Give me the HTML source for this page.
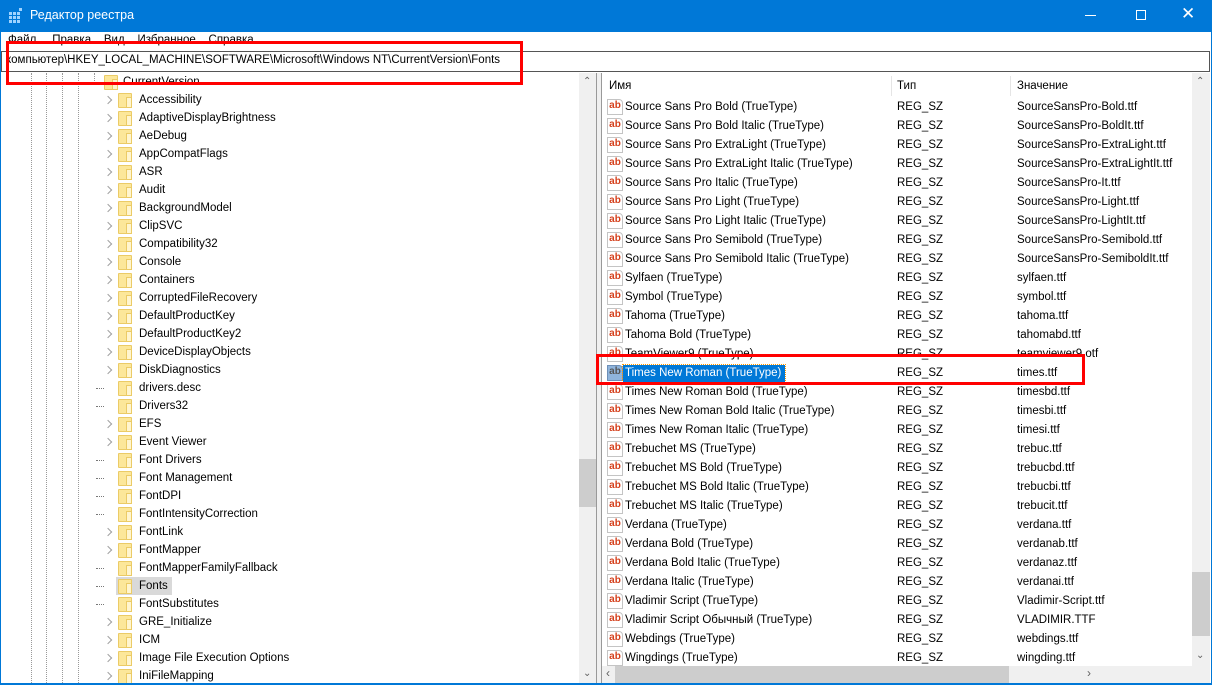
<!DOCTYPE html>
<html><head><meta charset="utf-8"><style>
*{margin:0;padding:0;box-sizing:border-box}
body{width:1212px;height:685px;overflow:hidden;background:#fff;font-family:"Segoe UI","Liberation Sans","DejaVu Sans",sans-serif;font-size:12px;color:#000;position:relative}
.a{position:absolute;white-space:nowrap}
.t{font-size:11.5px;line-height:18px}
.fold{position:absolute;width:14px;height:15px;background:#fce79a;border:1px solid #ebcb66;border-radius:1px}
.fold:after{content:"";position:absolute;right:-1px;bottom:-1px;width:4px;height:9px;background:#fff5cf;border:1px solid #ebcb66}
.chev{position:absolute;width:6px;height:6px;border-right:1.5px solid #a0a0a0;border-top:1.5px solid #a0a0a0;transform:rotate(45deg)}
.vd{position:absolute;width:1px;border-left:1px dotted #999;top:73px;height:610px}
.ic{position:absolute;width:16px;height:16px;border:1px solid #c4c4c4;background:#fff;font:bold 10px "Liberation Sans",sans-serif;color:#d5401c;line-height:12px;text-align:center;border-radius:0 4px 0 0}
</style></head><body>
<div class="a" style="left:0;top:0;width:1212px;height:32px;background:#0078d7"></div>
<svg class="a" style="left:8px;top:8px" width="16" height="16"><g fill="#9fd3ff"><rect x="1" y="4" width="3" height="3"/><rect x="5" y="4" width="3" height="3"/><rect x="9" y="4" width="3" height="3"/><rect x="1" y="8" width="3" height="3"/><rect x="5" y="8" width="3" height="3"/><rect x="9" y="8" width="3" height="3"/><rect x="1" y="12" width="3" height="3"/><rect x="5" y="12" width="3" height="3"/><rect x="9" y="12" width="3" height="3"/><rect x="11" y="0" width="3" height="3"/></g></svg>
<div class="a" style="left:30px;top:8px;color:#fff;font-size:12.5px">Редактор реестра</div>
<div class="a" style="left:1085px;top:15px;width:11px;height:1px;background:#fff"></div>
<div class="a" style="left:1136px;top:10px;width:10px;height:10px;border:1px solid #fff"></div>
<div class="a" style="left:1181px;top:4px;color:#fff;font-size:17px">✕</div>
<div class="a" style="left:0;top:32px;width:1212px;height:19px;background:#fff"></div>
<div class="a" style="left:8px;top:34px;font-size:11.5px">Файл&nbsp;&nbsp;&nbsp;&nbsp;&nbsp;Правка&nbsp;&nbsp;&nbsp;&nbsp;Вид&nbsp;&nbsp;&nbsp;&nbsp;Избранное&nbsp;&nbsp;&nbsp;&nbsp;Справка</div>
<div class="a" style="left:1px;top:51px;width:1209px;height:21px;border:1px solid #555;background:#fff"></div>
<div class="a" style="left:6px;top:54px;font-size:11.5px">компьютер\HKEY_LOCAL_MACHINE\SOFTWARE\Microsoft\Windows NT\CurrentVersion\Fonts</div>
<div class="vd" style="left:31px"></div><div class="vd" style="left:46px"></div><div class="vd" style="left:62px"></div><div class="vd" style="left:78px"></div>
<div class="a" style="left:94px;top:73px;width:1px;height:10px;border-left:1px dotted #999"></div>
<div class="a" style="left:86px;top:77px;color:#888;font-size:10px">⌄</div>
<div class="fold" style="left:104px;top:75px"></div>
<div class="a t" style="left:123px;top:73px">CurrentVersion</div>
<div id="tree"></div>
<div class="a" style="left:579px;top:73px;width:17px;height:611px;background:#f0f0f0"></div>
<div class="a" style="left:579px;top:459px;width:17px;height:48px;background:#cdcdcd"></div>
<div class="a" style="left:583px;top:76px;color:#606060;font-size:10px">⌃</div>
<div class="a" style="left:583px;top:668px;color:#606060;font-size:10px">⌄</div>
<div class="a" style="left:596px;top:73px;width:1px;height:611px;background:#999"></div>
<div class="a" style="left:597px;top:73px;width:4px;height:611px;background:#f0f0f0"></div>
<div class="a" style="left:601px;top:73px;width:1px;height:611px;background:#999"></div>
<div class="a" style="left:891px;top:76px;width:1px;height:20px;background:#e5e5e5"></div>
<div class="a" style="left:1010px;top:76px;width:1px;height:20px;background:#e5e5e5"></div>
<div class="a t" style="left:609px;top:77px">Имя</div>
<div class="a t" style="left:897px;top:77px">Тип</div>
<div class="a t" style="left:1017px;top:77px">Значение</div>
<div id="rows"></div>
<div class="a" style="left:1192px;top:73px;width:18px;height:593px;background:#f0f0f0"></div>
<div class="a" style="left:1192px;top:572px;width:18px;height:64px;background:#cdcdcd"></div>
<div class="a" style="left:1196px;top:76px;color:#606060;font-size:10px">⌃</div>
<div class="a" style="left:1196px;top:650px;color:#606060;font-size:10px">⌄</div>
<div class="a" style="left:602px;top:666px;width:608px;height:17px;background:#f0f0f0"></div>
<div class="a" style="left:615px;top:666px;width:394px;height:17px;background:#cdcdcd"></div>
<div class="a" style="left:606px;top:666px;color:#606060;font-size:12px">‹</div>
<div class="a" style="left:1087px;top:666px;color:#606060;font-size:12px">›</div>
<div class="a" style="left:0;top:683px;width:1212px;height:2px;background:#0078d7"></div>
<div class="a" style="left:0;top:32px;width:1px;height:653px;background:#0078d7"></div>
<div class="a" style="left:1211px;top:32px;width:1px;height:653px;background:#0078d7"></div>
<div class="a" style="left:6px;top:41px;width:517px;height:44px;border:3px solid #f00"></div>
<div class="a" style="left:596px;top:354px;width:489px;height:31px;border:3px solid #f00"></div>
<script>
var tree=["Accessibility","AdaptiveDisplayBrightness","AeDebug","AppCompatFlags","ASR","Audit","BackgroundModel","ClipSVC","Compatibility32","Console","Containers","CorruptedFileRecovery","DefaultProductKey","DefaultProductKey2","DeviceDisplayObjects","DiskDiagnostics","drivers.desc","Drivers32","EFS","Event Viewer","Font Drivers","Font Management","FontDPI","FontIntensityCorrection","FontLink","FontMapper","FontMapperFamilyFallback","Fonts","FontSubstitutes","GRE_Initialize","ICM","Image File Execution Options","IniFileMapping"];
var nochev={"drivers.desc":1,"Drivers32":1,"Font Drivers":1,"Font Management":1,"FontDPI":1,"FontIntensityCorrection":1,"FontMapperFamilyFallback":1,"Fonts":1,"FontSubstitutes":1};
var h="";tree.forEach(function(n,i){var y=91+i*18;
if(n=="Fonts")h+='<div class="a" style="left:116px;top:'+y+'px;width:56px;height:18px;background:#d9d9d9"></div>';
if(nochev[n])h+='<div class="a" style="left:96px;top:'+(y+9)+'px;width:8px;border-top:1px dotted #777"></div>';
else h+='<div class="chev" style="left:105px;top:'+(y+6)+'px"></div>';
h+='<div class="fold" style="left:118px;top:'+(y+2)+'px"></div><div class="a t" style="left:139px;top:'+y+'px">'+n+'</div>';});
document.getElementById("tree").innerHTML=h;
var R=[["Source Sans Pro Bold (TrueType)","SourceSansPro-Bold.ttf"],["Source Sans Pro Bold Italic (TrueType)","SourceSansPro-BoldIt.ttf"],["Source Sans Pro ExtraLight (TrueType)","SourceSansPro-ExtraLight.ttf"],["Source Sans Pro ExtraLight Italic (TrueType)","SourceSansPro-ExtraLightIt.ttf"],["Source Sans Pro Italic (TrueType)","SourceSansPro-It.ttf"],["Source Sans Pro Light (TrueType)","SourceSansPro-Light.ttf"],["Source Sans Pro Light Italic (TrueType)","SourceSansPro-LightIt.ttf"],["Source Sans Pro Semibold (TrueType)","SourceSansPro-Semibold.ttf"],["Source Sans Pro Semibold Italic (TrueType)","SourceSansPro-SemiboldIt.ttf"],["Sylfaen (TrueType)","sylfaen.ttf"],["Symbol (TrueType)","symbol.ttf"],["Tahoma (TrueType)","tahoma.ttf"],["Tahoma Bold (TrueType)","tahomabd.ttf"],["TeamViewer9 (TrueType)","teamviewer9.otf"],["Times New Roman (TrueType)","times.ttf"],["Times New Roman Bold (TrueType)","timesbd.ttf"],["Times New Roman Bold Italic (TrueType)","timesbi.ttf"],["Times New Roman Italic (TrueType)","timesi.ttf"],["Trebuchet MS (TrueType)","trebuc.ttf"],["Trebuchet MS Bold (TrueType)","trebucbd.ttf"],["Trebuchet MS Bold Italic (TrueType)","trebucbi.ttf"],["Trebuchet MS Italic (TrueType)","trebucit.ttf"],["Verdana (TrueType)","verdana.ttf"],["Verdana Bold (TrueType)","verdanab.ttf"],["Verdana Bold Italic (TrueType)","verdanaz.ttf"],["Verdana Italic (TrueType)","verdanai.ttf"],["Vladimir Script (TrueType)","Vladimir-Script.ttf"],["Vladimir Script Обычный (TrueType)","VLADIMIR.TTF"],["Webdings (TrueType)","webdings.ttf"],["Wingdings (TrueType)","wingding.ttf"]];
h="";R.forEach(function(r,i){var y=98+i*19,sel=i==14;
h+='<div class="ic" style="left:607px;top:'+(y+1)+'px;'+(sel?'background:#8fb4dc;color:#555;border-color:#6d8fb8':'')+'">ab</div>';
if(sel)h+='<div class="a" style="left:623px;top:'+(y+1)+'px;width:162px;height:17px;background:#0078d7;outline:1px dotted #f90"></div>';
h+='<div class="a t" style="left:625px;top:'+y+'px;'+(sel?'color:#fff':'')+'">'+r[0]+'</div><div class="a t" style="left:897px;top:'+y+'px">REG_SZ</div><div class="a t" style="left:1017px;top:'+y+'px">'+r[1]+'</div>';});
document.getElementById("rows").innerHTML=h;
</script>
</body></html>
